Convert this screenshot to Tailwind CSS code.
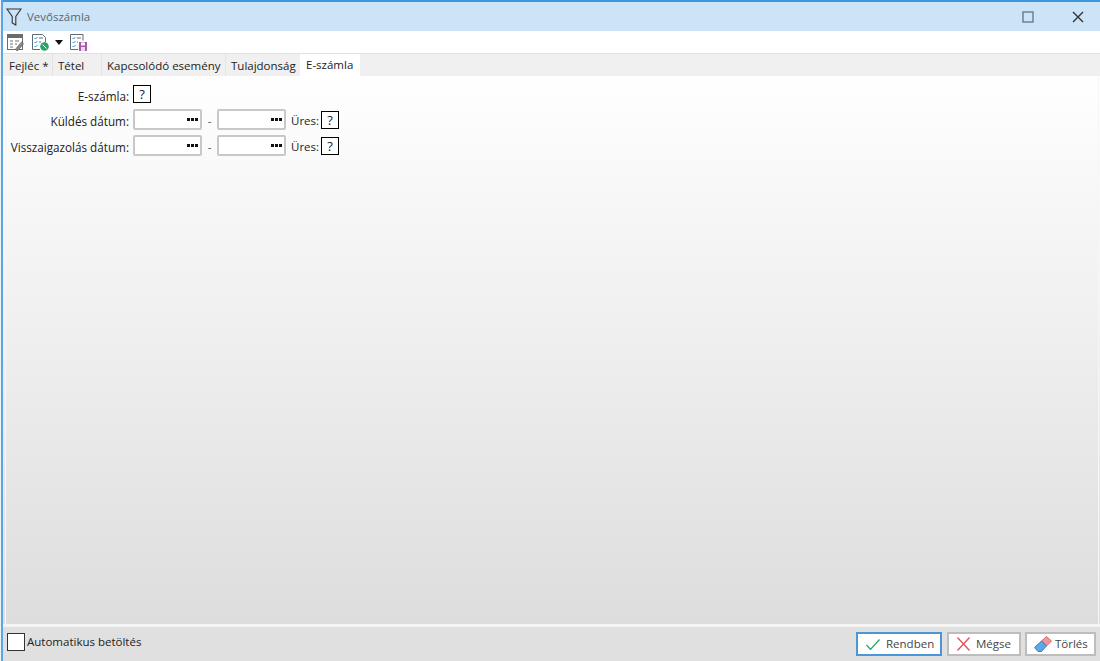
<!DOCTYPE html>
<html lang="hu">
<head>
    <meta charset="UTF-8">
    <title>Vevőszámla</title>
    <script src="https://cdn.jsdelivr.net/npm/@tailwindcss/browser@4"></script>
</head>
<body class="bg-[#f2f2f2] overflow-hidden">

<div class="h-[661px] w-[1099px] ml-px flex flex-col border-l-2 border-[#5aa5e6] text-[11.5px] leading-4 text-[#222] font-['Open_Sans','Noto_Sans',sans-serif]">

    <!-- Title bar -->
    <div class="h-[31px] shrink-0 flex items-center bg-[#cce4f7] border-t-2 border-[#3d96dc]">
        <svg class="ml-[3px] w-[16px] h-[20px]" viewBox="0 0 16 20" fill="none" stroke="#333" stroke-width="1.1">
            <path d="M1 2h14l-5.2 7.500V18l-3.600-2V9.500z"/>
        </svg>
        <span class="ml-[5px] text-[#5b6672] text-[11.5px]">Vevőszámla</span>
        <div class="ml-auto flex items-center">
            <svg class="w-[12px] h-[12px] mr-[38px]" viewBox="0 0 12 12" fill="none" stroke="#66707a" stroke-width="1.300"><rect x="1" y="1" width="10" height="10"/></svg>
            <svg class="w-[12px] h-[12px] mr-[16px]" viewBox="0 0 12 12" fill="none" stroke="#333" stroke-width="1.400"><path d="M1 1l10 10M11 1L1 11"/></svg>
        </div>
    </div>

    <!-- Toolbar -->
    <div class="h-[22px] shrink-0 flex items-center bg-white pl-[4px]">
        <svg class="w-[17px] h-[17px]" viewBox="0 0 17 17" fill="none">
            <rect x="0.500" y="0.500" width="15" height="15" stroke="#6b6b6b" fill="#fff"/>
            <rect x="1" y="1" width="14" height="3" fill="#6b6b6b"/>
            <path d="M3 7h3M8 7h4M3 10h3M8 10h2M3 13h3" stroke="#6b7280"/>
            <path d="M9 14.500l5-6c1-1 3 .5 2 2l-5 6c-1 .8-3-.5-2-2z" fill="#8a8a8a" stroke="#555" stroke-width=".6"/>
        </svg>
        <svg class="ml-[8px] w-[17px] h-[17px]" viewBox="0 0 17 17" fill="none">
            <path d="M8 15.500H.5V.5h10l3 3v5" stroke="#5f6b76"/>
            <path d="M2.500 4l1 1 2-2M2.500 8l1 1 2-2M2.500 12l1 1 2-2" stroke="#2a8fd0"/>
            <path d="M7 4h4M7 8h2" stroke="#5f6b76"/>
            <circle cx="12.500" cy="12.500" r="4.300" fill="#1fa866"/>
            <path d="M10.500 10.500l4 4" stroke="#fff"/>
        </svg>
        <svg class="ml-[6px] w-[8px] h-[5px]" viewBox="0 0 8 5"><path d="M0 0h8L4 5z" fill="#111"/></svg>
        <svg class="ml-[7px] w-[17px] h-[17px]" viewBox="0 0 17 17" fill="none">
            <path d="M8 15.500H.5V.5h12.500v6" stroke="#5f6b76"/>
            <path d="M2.500 4l1 1 2-2M2.500 8l1 1 2-2M2.500 12l1 1 2-2" stroke="#2a8fd0"/>
            <path d="M7 4h4M7 8h1" stroke="#5f6b76"/>
            <rect x="9" y="8" width="8" height="9" fill="#a45aa8"/>
            <rect x="11" y="8.500" width="4" height="3" fill="#fff"/>
            <rect x="11" y="13" width="4" height="4" fill="#e9d5ea"/>
        </svg>
    </div>

    <!-- Tabs -->
    <div class="h-[23px] shrink-0 flex items-stretch bg-[#f0f0f0] border-t border-[#e0e0e0]">
        <div class="w-[2px]"></div>
        <div class="w-[48px] pl-[4px] pt-[4px] border-r border-[#e4e4e4] whitespace-nowrap">Fejléc *</div>
        <div class="w-[49px] pl-[5px] pt-[4px] border-r border-[#e4e4e4]">Tétel</div>
        <div class="w-[124px] pl-[5px] pt-[4px] border-r border-[#e4e4e4] whitespace-nowrap">Kapcsolódó esemény</div>
        <div class="w-[74px] pl-[5px] pt-[4px] whitespace-nowrap">Tulajdonság</div>
        <div class="w-[60px] pl-[6px] pt-[3px] bg-white whitespace-nowrap">E-számla</div>
    </div>

    <!-- Filter panel -->
    <div class="flex-1 min-h-0 flex bg-gradient-to-b from-white to-[#e0e0e0]">
        <div class="flex-1 ml-[2px] mr-px flex flex-col gap-[5px] pt-[8px] border-x border-[#f6f6f6] bg-gradient-to-b from-white to-[#dddddd]">
            <div class="flex items-center h-[20px]">
                <span class="w-[123px] mr-[4px] pt-[3px] text-right text-[11.7px]">E-számla:</span>
                <div class="w-[18px] h-[18px] border border-black bg-white flex items-center justify-center text-[13px]">?</div>
            </div>
            <div class="flex items-center h-[21px]">
                <span class="w-[123px] mr-[4px] pt-[3px] text-right text-[11.7px]">Küldés dátum:</span>
                <div class="w-[69px] h-[21px] border-2 border-[#c8c8c8] rounded-[2px] bg-white flex items-center justify-end pr-[2px]">
                    <svg class="w-[11px] h-[3px]" viewBox="0 0 11 3" fill="#111"><rect width="3" height="3"/><rect x="4" width="3" height="3"/><rect x="8" width="3" height="3"/></svg>
                </div>
                <span class="w-[15px] pt-[3px] text-center text-[#555]">-</span>
                <div class="w-[69px] h-[21px] border-2 border-[#c8c8c8] rounded-[2px] bg-white flex items-center justify-end pr-[2px]">
                    <svg class="w-[11px] h-[3px]" viewBox="0 0 11 3" fill="#111"><rect width="3" height="3"/><rect x="4" width="3" height="3"/><rect x="8" width="3" height="3"/></svg>
                </div>
                <span class="ml-[5px] mr-[4px] w-[26px] pt-[3px] whitespace-nowrap">Üres:</span>
                <div class="mt-px w-[18px] h-[18px] border border-black bg-white flex items-center justify-center text-[13px]">?</div>
            </div>
            <div class="flex items-center h-[21px]">
                <span class="w-[123px] mr-[4px] pt-[3px] text-right whitespace-nowrap text-[11.7px]">Visszaigazolás dátum:</span>
                <div class="w-[69px] h-[21px] border-2 border-[#c8c8c8] rounded-[2px] bg-white flex items-center justify-end pr-[2px]">
                    <svg class="w-[11px] h-[3px]" viewBox="0 0 11 3" fill="#111"><rect width="3" height="3"/><rect x="4" width="3" height="3"/><rect x="8" width="3" height="3"/></svg>
                </div>
                <span class="w-[15px] pt-[3px] text-center text-[#555]">-</span>
                <div class="w-[69px] h-[21px] border-2 border-[#c8c8c8] rounded-[2px] bg-white flex items-center justify-end pr-[2px]">
                    <svg class="w-[11px] h-[3px]" viewBox="0 0 11 3" fill="#111"><rect width="3" height="3"/><rect x="4" width="3" height="3"/><rect x="8" width="3" height="3"/></svg>
                </div>
                <span class="ml-[5px] mr-[4px] w-[26px] pt-[3px] whitespace-nowrap">Üres:</span>
                <div class="mt-px w-[18px] h-[18px] border border-black bg-white flex items-center justify-center text-[13px]">?</div>
            </div>
        </div>
    </div>

    <!-- Footer -->
    <div class="h-[37px] shrink-0 flex items-start bg-[#e0e0e0] border-t-[3px] border-[#f4f4f4]">
        <div class="ml-[4px] mt-[6px] w-[18px] h-[18px] border border-[#333] bg-white"></div>
        <span class="mt-[7px] ml-[2px]">Automatikus betöltés</span>
        <div class="ml-auto mt-[5px] mr-[4px] flex gap-[4px] text-[#444]">
            <div class="w-[86px] h-[24px] mr-px border-2 border-[#4a96d6] bg-white flex items-center pl-[8px]">
                <svg class="w-[14px] h-[11px]" viewBox="0 0 14 11" fill="none" stroke="#26a65b" stroke-width="1.200"><path d="M.5 6l4 4.500L13.500 .5"/></svg>
                <span class="ml-[6px]">Rendben</span>
            </div>
            <div class="w-[74px] h-[24px] border-2 border-[#bdbdbd] bg-white flex items-center pl-[8px]">
                <svg class="w-[13px] h-[14px]" viewBox="0 0 13 14" fill="none" stroke="#e8474c" stroke-width="1.200"><path d="M.5 .5l12 13M12.500 .5l-12 13"/></svg>
                <span class="ml-[6px]">Mégse</span>
            </div>
            <div class="w-[71px] h-[24px] border-2 border-[#bdbdbd] bg-white flex items-center pl-[7px]">
                <svg class="w-[18px] h-[16px]" viewBox="0 0 18 16">
                    <path d="M7.500 5L12.500 .5l5 4.500-5 5z" fill="#f0959b" stroke="#c9545c" stroke-width=".8"/>
                    <path d="M7.500 5l5 5-5 5.500H4L.5 11.500z" fill="#5aaae6" stroke="#1e6fb0" stroke-width=".8"/>
                </svg>
                <span class="ml-[3px]">Törlés</span>
            </div>
        </div>
    </div>
</div>

</body>
</html>
